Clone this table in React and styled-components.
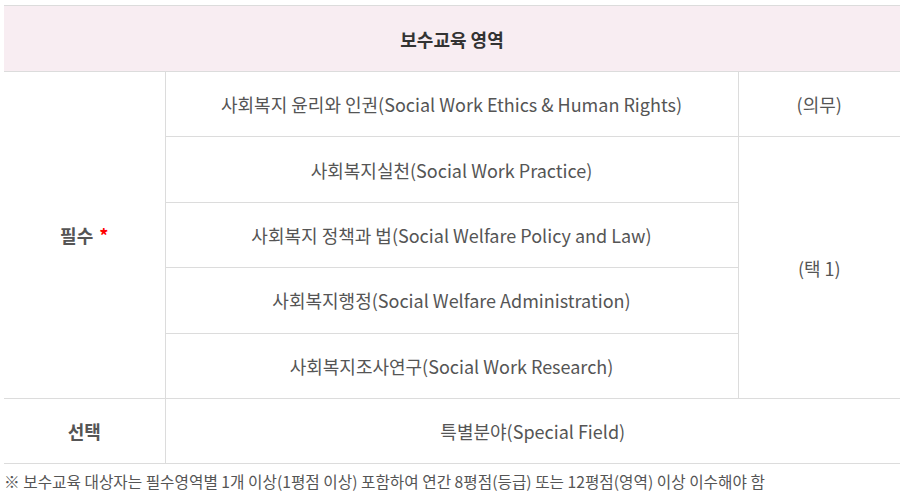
import React from 'react'
import styled, { createGlobalStyle } from 'styled-components'

const GlobalStyle = createGlobalStyle`
  body {
    margin: 0;
    background: #fff;
    font-family: "Noto Sans CJK KR", "Noto Sans", sans-serif;
  }
`

const Page = styled.main`
  padding: 5px 8px 0 4px;
`

const Table = styled.table`
  width: 100%;
  border-collapse: collapse;
  table-layout: fixed;
  border-top: 1px solid #dcdcdc;
  font-size: 18px;
  color: #555;
`

const HeadCell = styled.th`
  height: 65px;
  background: #f8edf2;
  color: #333;
  font-weight: 700;
  font-size: 18px;
  border-bottom: 1px solid #dcdcdc;
  padding: 0;
`

const Cell = styled.td`
  height: 64.4px;
  padding: 0;
  text-align: center;
  border-bottom: 1px solid #dcdcdc;
  border-left: ${(p) => (p.$first ? 'none' : '1px solid #dcdcdc')};
  font-weight: ${(p) => (p.$bold ? 700 : 400)};
`

const Star = styled.span`
  color: #f00;
  margin-left: 6px;
`

const Note = styled.p`
  margin: 6px 0 0;
  font-size: 15.7px;
  color: #555;
`

const required = [
  '사회복지실천(Social Work Practice)',
  '사회복지 정책과 법(Social Welfare Policy and Law)',
  '사회복지행정(Social Welfare Administration)',
  '사회복지조사연구(Social Work Research)',
]

export default function App() {
  return (
    <Page>
      <GlobalStyle />
      <Table>
        <colgroup>
          <col style={{ width: '161px' }} />
          <col style={{ width: '573px' }} />
          <col />
        </colgroup>
        <thead>
          <tr>
            <HeadCell colSpan={3}>보수교육 영역</HeadCell>
          </tr>
        </thead>
        <tbody>
          <tr>
            <Cell $first $bold rowSpan={5}>
              필수<Star>*</Star>
            </Cell>
            <Cell>사회복지 윤리와 인권(Social Work Ethics &amp; Human Rights)</Cell>
            <Cell>(의무)</Cell>
          </tr>
          {required.map((item, i) => (
            <tr key={item}>
              <Cell>{item}</Cell>
              {i === 0 && <Cell rowSpan={4}>(택 1)</Cell>}
            </tr>
          ))}
          <tr>
            <Cell $first $bold>선택</Cell>
            <Cell colSpan={2}>특별분야(Special Field)</Cell>
          </tr>
        </tbody>
      </Table>
      <Note>※ 보수교육 대상자는 필수영역별 1개 이상(1평점 이상) 포함하여 연간 8평점(등급) 또는 12평점(영역) 이상 이수해야 함</Note>
    </Page>
  )
}
